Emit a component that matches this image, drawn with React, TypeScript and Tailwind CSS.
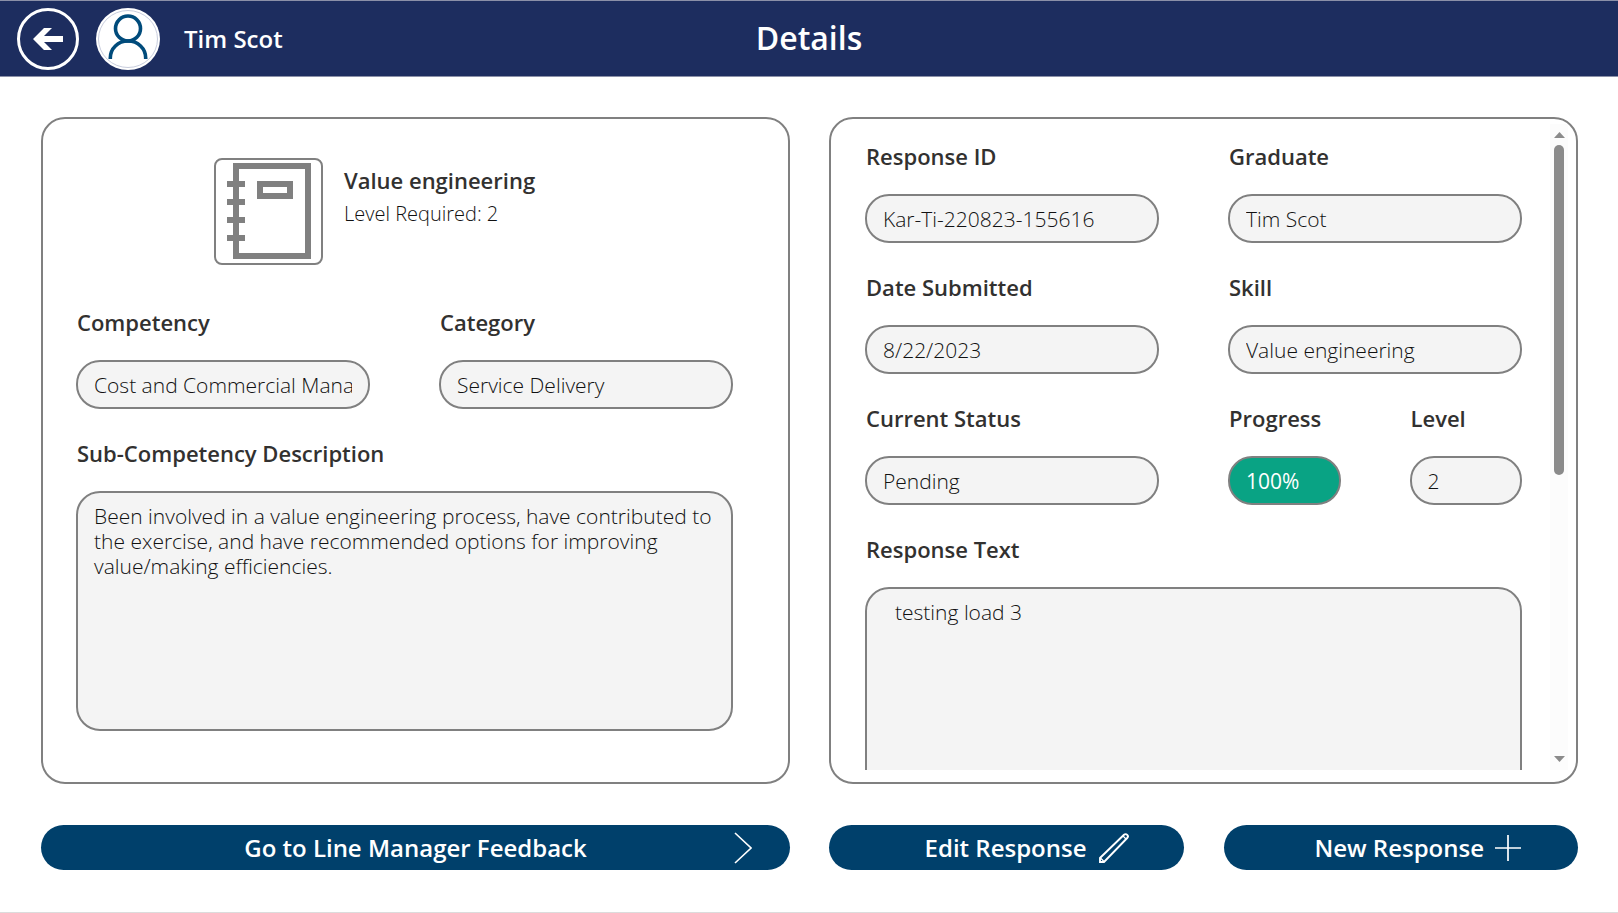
import { useId } from "react";

const BOX =
  "block w-full border-2 border-[#808080] bg-[#f4f4f4] text-[21px] font-light text-[#111111] outline-none";

function Label({ htmlFor, children }: { htmlFor: string; children: string }) {
  return (
    <label htmlFor={htmlFor} className="block pl-px text-[22px] leading-[30px] font-semibold">
      {children}
    </label>
  );
}

function Field({ label, value }: { label: string; value: string }) {
  const id = useId();
  return (
    <div className="flex min-w-0 flex-col gap-[23px]">
      <Label htmlFor={id}>{label}</Label>
      <input id={id} readOnly value={value} className={`${BOX} h-[49px] rounded-3xl px-4`} />
    </div>
  );
}

function ProgressField({ label, value }: { label: string; value: string }) {
  const id = useId();
  return (
    <div className="flex min-w-0 flex-col gap-[23px]">
      <Label htmlFor={id}>{label}</Label>
      <input
        id={id}
        readOnly
        value={value}
        className="block h-[49px] w-full rounded-3xl border-2 border-[#808080] bg-[#09a384] px-4 text-[21px] text-white outline-none"
      />
    </div>
  );
}

function BackIcon() {
  return (
    <svg viewBox="0 0 30 24" className="h-6 w-[30px]" fill="white" aria-hidden="true">
      <path d="M0 12 11 1h8l-8 8h19v6H11l8 8h-8z" />
    </svg>
  );
}

function PersonIcon() {
  return (
    <svg viewBox="0 0 64 62" className="h-[62px] w-16" fill="none" aria-hidden="true">
      <ellipse cx="32" cy="31" rx="32" ry="31" fill="white" />
      <ellipse cx="32" cy="31" rx="29.5" ry="28.5" stroke="#b9bfd3" strokeWidth="0.8" />
      <circle cx="32" cy="20.5" r="12.5" stroke="#004b7b" strokeWidth="3.6" />
      <path d="M14.3 51v-1C14.3 40.500 22 33 32 33S49.700 40.500 49.700 50v1" stroke="#004b7b" strokeWidth="3.6" />
    </svg>
  );
}

function NotebookIcon() {
  return (
    <svg viewBox="0 0 14 16" className="h-24 w-[84px]" aria-hidden="true">
      <g fill="none" stroke="#808080">
        <path d="M1.500.5h12v15h-12z" />
        <path d="M5.500 3.500h5v2h-5z" />
        <path d="M0 3.500h3M0 6.500h3M0 9.500h3M0 12.500h3" />
      </g>
    </svg>
  );
}

function ScrollTrack() {
  return (
    <div aria-hidden="true" className="flex w-[18px] flex-col items-center bg-[#fcfcfc] py-2 text-[#8b8b8b]">
      <svg viewBox="0 0 11 6" className="h-[6px] w-[11px]" fill="currentColor">
        <path d="M5.500 0 11 6H0z" />
      </svg>
      <div className="mt-[7px] min-h-0 w-[10px] flex-1">
        <div className="h-[54%] rounded-full bg-[#8b8b8b]" />
      </div>
      <svg viewBox="0 0 11 6" className="h-[6px] w-[11px]" fill="currentColor">
        <path d="M0 0h11L5.500 6z" />
      </svg>
    </div>
  );
}

const BUTTON =
  "flex h-[45px] items-center rounded-3xl bg-[#00406b] text-2xl font-semibold text-white";

export default function App() {
  const descId = useId();
  const textId = useId();
  return (
    <div className="flex h-screen flex-col border-b border-[#dcdcdc] bg-white font-['Open_Sans','Noto_Sans',sans-serif] text-[#323130]">
      <header className="grid h-[77px] shrink-0 grid-cols-[1fr_auto_1fr] items-center border-y border-[#8b90a8] bg-[#1d2d5f] text-white">
        <div className="flex items-center pl-[17px]">
          <button
            aria-label="Back"
            className="flex size-[62px] items-center justify-center rounded-full border-[3px] border-white"
          >
            <BackIcon />
          </button>
          <span className="ml-[17px]">
            <PersonIcon />
          </span>
          <span className="ml-6 text-2xl font-semibold">Tim Scot</span>
        </div>
        <h1 className="pb-px text-[32px] font-semibold">Details</h1>
      </header>

      <main className="grid min-h-0 flex-1 grid-cols-2 grid-rows-[minmax(0,1fr)_auto] gap-x-[39px] gap-y-[41px] pt-10 pr-10 pb-[42px] pl-[41px]">
        <section className="overflow-hidden rounded-3xl border-2 border-[#808080] pt-[39px] pr-[55px] pl-[33px]">
          <div className="flex gap-[21px] pl-[138px]">
            <div className="flex h-[107px] w-[109px] items-start justify-center rounded-lg border-2 border-[#808080] pt-[3px]">
              <NotebookIcon />
            </div>
            <div className="pt-[7px]">
              <h2 className="text-[22px] leading-[30px] font-semibold">Value engineering</h2>
              <p className="mt-1 text-xl leading-[30px] font-light text-[#111111]">Level Required: 2</p>
            </div>
          </div>
          <div className="mt-[42px] grid grid-cols-2 gap-x-[69px]">
            <Field label="Competency" value="Cost and Commercial Management" />
            <Field label="Category" value="Service Delivery" />
          </div>
          <div className="mt-[29px] flex flex-col gap-[23px]">
            <Label htmlFor={descId}>Sub-Competency Description</Label>
            <textarea
              id={descId}
              readOnly
              className={`${BOX} h-60 resize-none rounded-3xl py-[11px] pr-0 pl-4 leading-[25px]`}
              value="Been involved in a value engineering process, have contributed to the exercise, and have recommended options for improving value/making efficiencies."
            />
          </div>
        </section>

        <section className="flex overflow-hidden rounded-3xl border-2 border-[#808080] pt-[5px] pr-2 pb-3 pl-[34px]">
          <div className="min-w-0 flex-1 overflow-y-auto pt-[17px] pr-7 [scrollbar-width:none]">
            <div className="grid grid-cols-2 gap-x-[69px] gap-y-[29px]">
              <Field label="Response ID" value="Kar-Ti-220823-155616" />
              <Field label="Graduate" value="Tim Scot" />
              <Field label="Date Submitted" value="8/22/2023" />
              <Field label="Skill" value="Value engineering" />
              <Field label="Current Status" value="Pending" />
              <div className="grid grid-cols-2 gap-x-[69px]">
                <ProgressField label="Progress" value="100%" />
                <Field label="Level" value="2" />
              </div>
              <div className="col-span-2 flex flex-col gap-[23px]">
                <Label htmlFor={textId}>Response Text</Label>
                <textarea
                  id={textId}
                  readOnly
                  className={`${BOX} h-[600px] resize-none rounded-3xl px-7 py-[11px] leading-[25px]`}
                  value="testing load 3"
                />
              </div>
            </div>
          </div>
          <ScrollTrack />
        </section>

        <button className={`${BUTTON} pr-[38px] pl-14`}>
          <span className="flex-1 text-center">Go to Line Manager Feedback</span>
          <svg viewBox="0 0 18 32" className="h-8 w-[18px]" fill="none" stroke="white" strokeWidth="1.6" aria-hidden="true">
            <path d="M1 1l16 15L1 31" />
          </svg>
        </button>
        <div className="grid grid-cols-2 gap-10">
          <button className={`${BUTTON} justify-end gap-3 pr-[55px]`}>
            Edit Response
            <svg viewBox="0 0 30 30" className="size-[30px]" fill="none" stroke="white" strokeWidth="1.9" aria-hidden="true">
              <path d="M1 29v-4L25 1.800a2.200 2.200 0 0 1 3.200 3.200L5 29z" />
              <path d="M1.500 25 5 28.500M24 3l3 3" strokeWidth="1.2" />
            </svg>
          </button>
          <button className={`${BUTTON} justify-end gap-[11px] pr-[57px]`}>
            New Response
            <svg viewBox="0 0 26 26" className="size-[26px]" fill="none" stroke="white" strokeWidth="1.7" aria-hidden="true">
              <path d="M13 0v26M0 13h26" />
            </svg>
          </button>
        </div>
      </main>
    </div>
  );
}
